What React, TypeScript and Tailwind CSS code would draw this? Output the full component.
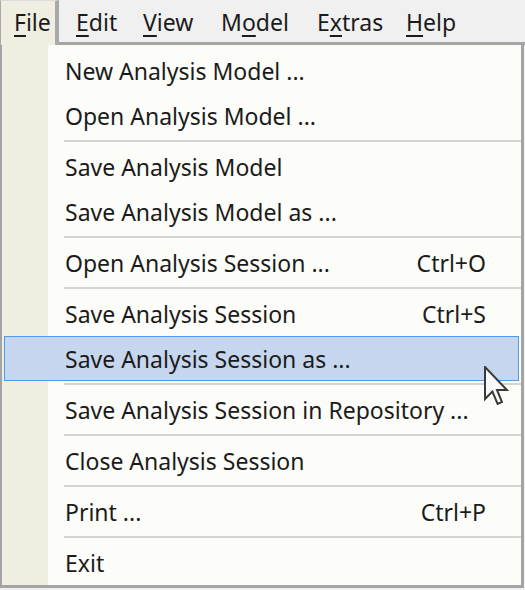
const font = { fontFamily: '"Noto Sans", "Open Sans", sans-serif' };

type Item = { label: string; shortcut?: string; active?: boolean } | "sep";

const items: Item[] = [
  { label: "New Analysis Model ..." },
  { label: "Open Analysis Model ..." },
  "sep",
  { label: "Save Analysis Model" },
  { label: "Save Analysis Model as ..." },
  "sep",
  { label: "Open Analysis Session ...", shortcut: "Ctrl+O" },
  "sep",
  { label: "Save Analysis Session", shortcut: "Ctrl+S" },
  { label: "Save Analysis Session as ...", active: true },
  "sep",
  { label: "Save Analysis Session in Repository ..." },
  "sep",
  { label: "Close Analysis Session" },
  "sep",
  { label: "Print ...", shortcut: "Ctrl+P" },
  "sep",
  { label: "Exit" },
];

function Mn({ pre, u, post }: { pre?: string; u: string; post?: string }) {
  return (
    <span>
      {pre}
      <span className="underline decoration-[1.5px] underline-offset-[4px]">{u}</span>
      {post}
    </span>
  );
}

export default function App() {
  return (
    <div className="w-[525px] h-[590px] bg-[#f0f0f0] text-[#1b1b1b] text-[23px] leading-[30px] relative overflow-hidden" style={font}>
      {/* menu bar */}
      <div className="flex h-[45px]">
        <div className="w-[59px] h-[45px] bg-[#f0ede1] border-l border-t border-r-[4px] border-[#a9a9a9] border-t-[#dcdcdc] pl-[13px] pt-[6px]">
          <Mn u="F" post="ile" />
        </div>
        <div className="flex-1 flex border-b-[3px] border-[#a4a4a4] pl-[17px] pt-[7px]">
          <div className="w-[67px]"><Mn u="E" post="dit" /></div>
          <div className="w-[78px]"><Mn u="V" post="iew" /></div>
          <div className="w-[96px]"><Mn pre="M" u="o" post="del" /></div>
          <div className="w-[89px]"><Mn pre="E" u="x" post="tras" /></div>
          <div><Mn u="H" post="elp" /></div>
        </div>
      </div>

      {/* dropdown */}
      <div className="w-[524px] h-[543px] border-l-[2px] border-r-[3px] border-b-[3px] border-[#a4a4a4] bg-[linear-gradient(to_right,#f0ede1_46px,#fcfcf8_46px)] pt-[3px]">
        {items.map((it, i) =>
          it === "sep" ? (
            <div key={i} className="h-[6px] flex items-center pl-[62px]">
              <div className="h-[2px] w-full bg-[#d4d4d0]" />
            </div>
          ) : it.active ? (
            <div key={i} className="h-[45px] mx-[2px] bg-[#c5d6ee] border border-[#4a9cf0] flex items-center pl-[60px] pr-[32px]">
              <span className="flex-1">{it.label}</span>
              {it.shortcut && <span>{it.shortcut}</span>}
            </div>
          ) : (
            <div key={i} className="h-[45px] flex items-center pl-[63px] pr-[35px]">
              <span className="flex-1">{it.label}</span>
              {it.shortcut && <span>{it.shortcut}</span>}
            </div>
          )
        )}
      </div>

      {/* mouse cursor */}
      <svg className="absolute left-[484px] top-[366px]" width="26" height="40" viewBox="0 0 13 20">
        <path
          d="M0.5 0.5 L0.5 16.5 L4.2 12.8 L6.8 19 L9 18 L6.5 12 L11.5 12 Z"
          fill="#fafafa"
          stroke="#3a3a3a"
          strokeWidth="1"
          strokeLinejoin="miter"
        />
      </svg>
    </div>
  );
}
